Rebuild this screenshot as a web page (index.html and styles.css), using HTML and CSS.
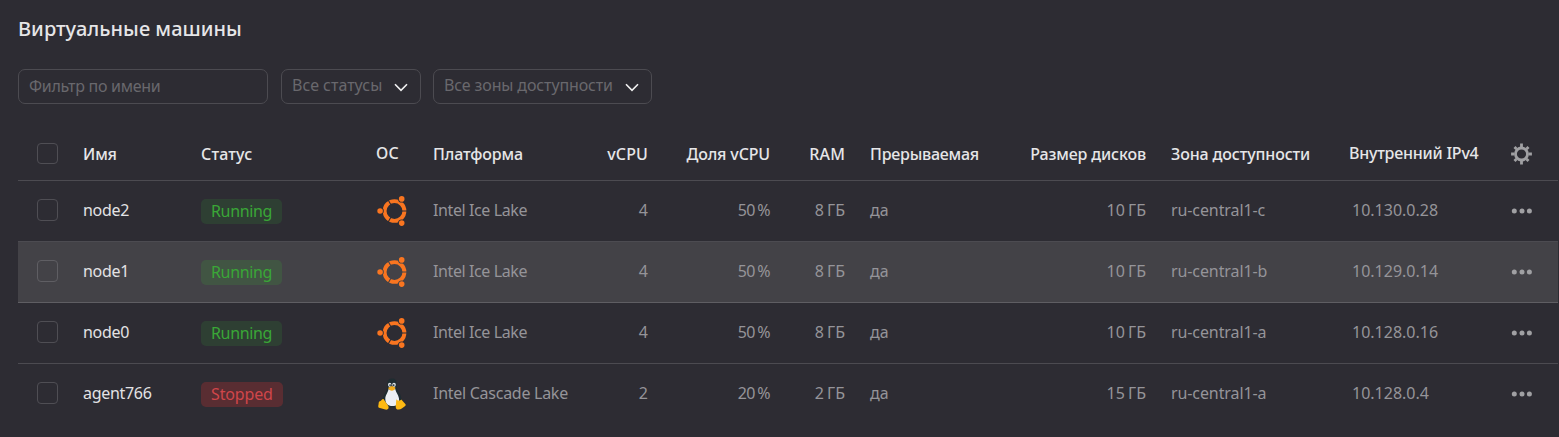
FILE: index.html
```
<!DOCTYPE html>
<html lang="ru">
<head>
<meta charset="utf-8">
<title>Виртуальные машины</title>
<link rel="stylesheet" href="styles.css">
</head>
<body>
<svg class="defs" width="0" height="0" aria-hidden="true">
  <mask id="ring-gaps" maskUnits="userSpaceOnUse" x="0" y="0" width="30" height="30">
    <path fill="#fff" d="M0 0h30v30H0z"/>
    <path stroke="#000" stroke-width="1.1" d="M17.500 15H30M17.500 15L10.900 3.500M17.500 15L10.900 26.500"/>
    <circle cx="3.100" cy="15" r="3.700"/><circle cx="24.700" cy="2.900" r="3.700"/><circle cx="24.700" cy="27.100" r="3.700"/>
  </mask>
  <symbol id="ubuntu" viewBox="0 0 30 30">
    <circle cx="17.500" cy="15" r="9.900" fill="none" stroke="#f97520" stroke-width="3.900" mask="url(#ring-gaps)"/>
    <g fill="#f97520">
      <circle cx="3.100" cy="15" r="2.800"/><circle cx="24.700" cy="2.900" r="2.800"/><circle cx="24.700" cy="27.100" r="2.800"/>
    </g>
  </symbol>
  <symbol id="dots" viewBox="0 0 21 6">
    <circle cx="3.300" cy="3" r="2.500"/><circle cx="11" cy="3" r="2.500"/><circle cx="18.400" cy="3" r="2.500"/>
  </symbol>
</svg>
<main class="page">
  <h1 class="title">Виртуальные машины</h1>
  <div class="filters">
    <div class="control search"><span>Фильтр по имени</span></div>
    <div class="control select status-select"><span>Все статусы</span><svg class="chevron" viewBox="0 0 14 9"><path d="M1 1.200L7 7.400L13 1.200"/></svg></div>
    <div class="control select zone-select"><span>Все зоны доступности</span><svg class="chevron" viewBox="0 0 14 9"><path d="M1 1.200L7 7.400L13 1.200"/></svg></div>
  </div>
  <div class="table">
    <div class="row head">
      <div class="check"><i class="box"></i></div>
      <div>Имя</div><div class="wide">Статус</div><div class="up wide">ОС</div><div>Платформа</div>
      <div class="num wide">vCPU</div><div class="num">Доля vCPU</div><div class="num wide">RAM</div>
      <div class="after tight">Прерываемая</div><div class="num">Размер дисков</div><div class="after">Зона доступности</div><div class="up tight">Внутренний IPv4</div>
      <div class="act"><svg class="gear" viewBox="0 0 22 22"><circle cx="10.500" cy="11" r="6"/><path d="M10.500 4V.6M10.500 18v3.400M3.500 11H.1M17.500 11h3.400M5.500 6L3.500 4M15.500 6l2-2M5.500 16l-2 2M15.500 16l2 2"/></svg></div>
    </div>
    <div class="row">
      <div class="check"><i class="box"></i></div>
      <div class="name">node2</div><div><span class="badge run">Running</span></div><div><svg class="os"><use href="#ubuntu"/></svg></div><div class="platform ice">Intel Ice Lake</div>
      <div class="num">4</div><div class="num percent">50 %</div><div class="num size">8 ГБ</div>
      <div class="after">да</div><div class="num size">10 ГБ</div><div class="after zone">ru-central1-c</div><div class="ip">10.130.0.28</div>
      <div class="act"><svg class="more"><use href="#dots"/></svg></div>
    </div>
    <div class="row hover">
      <div class="check"><i class="box"></i></div>
      <div class="name">node1</div><div><span class="badge run">Running</span></div><div><svg class="os"><use href="#ubuntu"/></svg></div><div class="platform ice">Intel Ice Lake</div>
      <div class="num">4</div><div class="num percent">50 %</div><div class="num size">8 ГБ</div>
      <div class="after">да</div><div class="num size">10 ГБ</div><div class="after zone">ru-central1-b</div><div class="ip">10.129.0.14</div>
      <div class="act"><svg class="more"><use href="#dots"/></svg></div>
    </div>
    <div class="row">
      <div class="check"><i class="box"></i></div>
      <div class="name">node0</div><div><span class="badge run">Running</span></div><div><svg class="os"><use href="#ubuntu"/></svg></div><div class="platform ice">Intel Ice Lake</div>
      <div class="num">4</div><div class="num percent">50 %</div><div class="num size">8 ГБ</div>
      <div class="after">да</div><div class="num size">10 ГБ</div><div class="after zone">ru-central1-a</div><div class="ip">10.128.0.16</div>
      <div class="act"><svg class="more"><use href="#dots"/></svg></div>
    </div>
    <div class="row last">
      <div class="check"><i class="box"></i></div>
      <div class="name">agent766</div><div><span class="badge stop">Stopped</span></div>
      <div><svg class="tux" viewBox="0 0 28 32">
        <path fill="#1f2c31" d="M14 .5c-3.500 0-4.800 2.600-4.700 6 .1 3.500.1 5-1.800 7.800C5.500 17.300 4.300 20 5 23.500l5 6h10l3.500-7c0-4-1.300-6.500-3.300-9.500C18.500 10.500 18.800 9 18.700 6.300 18.600 2.500 17.300.5 14 .5z"/>
        <path fill="#eceff4" d="M10.600 11c2.300 1.600 4.500 1.400 6.600-.2.800 4.200 4 6.700 3.900 11.200 0 4-2.600 6-6.800 6s-7-2.600-7-7c0-4 2.700-6.300 3.300-10z"/>
        <ellipse cx="11.700" cy="6.800" rx="1.700" ry="2.100" fill="#dfe4e8"/><ellipse cx="16" cy="6.800" rx="1.800" ry="2.100" fill="#dfe4e8"/>
        <circle cx="12.100" cy="7.100" r=".9" fill="#202c30"/><circle cx="15.700" cy="7.100" r=".9" fill="#202c30"/>
        <path fill="#f4ac1b" d="M10.200 9.800L13.800 8l3.600 1.500c.2 1.600-2 3.200-3.600 3.200S10.400 11.500 10.200 9.800z"/>
        <path fill="#fdb913" d="M5.500 21l4.800 7c1 2.500-.5 4-3 3.600L1 29.800C-.2 29 .3 27.500.6 26c.2-1.600 0-2.500 1.400-2.800C3.500 22.800 4 20.500 5.500 21zM18.300 21.300c1 1.700 4 1.600 5 .2l4 4.500c.9 1 .3 1.900-.8 2.500-1.800 1-3.500 3-5.700 3.100-2.700.2-3.300-1.400-3-3.900z"/>
      </svg></div><div class="platform">Intel Cascade Lake</div>
      <div class="num">2</div><div class="num percent">20 %</div><div class="num size">2 ГБ</div>
      <div class="after">да</div><div class="num size">15 ГБ</div><div class="after zone">ru-central1-a</div><div class="ip">10.128.0.4</div>
      <div class="act"><svg class="more"><use href="#dots"/></svg></div>
    </div>
  </div>
</main>
</body>
</html>
```
FILE: styles.css
```
* { box-sizing: border-box; }
body { margin: 0; background: #2d2c33; color: #959499; font: 16px/20px "Noto Sans", sans-serif; overflow: hidden; }
.defs { display: block; }
.page { height: 437px; padding: 15px 1px 0 18px; }
.title { margin: 0; font-size: 20px; line-height: 28px; font-weight: 500; letter-spacing: 0.03px; color: #e6e6e8; white-space: nowrap; }
.filters { display: flex; margin-top: 26px; color: #69686d; white-space: nowrap; }
.control { height: 35px; border: 1px solid #4c4b51; border-radius: 7px; padding: 0 10px; display: flex; align-items: center; }
.search { width: 250px; margin-right: 13px; padding-bottom: 2px; letter-spacing: -0.28px; }
.status-select { width: 140px; margin-right: 12px; }
.zone-select { width: 219px; letter-spacing: -0.13px; }
.select { justify-content: space-between; padding-right: 12px; padding-bottom: 3px; }
.chevron { width: 14px; height: 9px; margin-top: 5px; fill: none; stroke: #f1f1f2; stroke-width: 1.6; }
.table { margin-top: 23px; }
.row { display: grid; grid-template-columns: 65px 118px 175px 57px 115px 100px 122px 75px 155px 146px 203px 162px 47px; align-items: center; height: 61px; border-bottom: 1px solid #4c4b51; padding-bottom: 3px; white-space: nowrap; }
.head { height: 54px; font-weight: 500; letter-spacing: -0.13px; color: #e6e6e8; padding-bottom: 0; }
.head .wide { letter-spacing: 0.15px; }
.head .tight { letter-spacing: -0.23px; }
.hover { background: #434247; border-color: #5f5e63; }
.last { border: 0; padding-bottom: 4px; }
.check { padding-left: 19px; }
.box { display: block; width: 21px; height: 22px; border: 1px solid #4f4e54; border-radius: 4px; }
.head .box { height: 21px; margin-top: -1px; }
.hover .box { border-color: #5f5e63; }
.name { color: #e3e3e5; letter-spacing: -0.3px; }
.platform { letter-spacing: -0.27px; }
.platform.ice { letter-spacing: -0.4px; }
.percent { word-spacing: -1px; letter-spacing: -0.6px; }
.size { word-spacing: -1px; }
.zone { letter-spacing: -0.1px; }
.up { margin-top: -2px; }
.num { text-align: right; }
.after { padding-left: 25px; }
.ip { padding-left: 3px; }
.badge { display: inline-block; height: 25px; line-height: 25px; padding: 0 10px; border-radius: 5px; margin-top: 4px; vertical-align: middle; letter-spacing: -0.35px; }
.stop { letter-spacing: -0.15px; }
.run { background: rgba(59,165,53,.16); color: #3aa737; }
.hover .run { background: rgba(59,165,53,.2); }
.stop { background: rgba(210,47,48,.27); color: #d0464a; }
.os { display: block; width: 30px; height: 30px; margin: 3px 0 0 1px; }
.tux { display: block; width: 28px; height: 32px; margin: 3px 0 0 2px; }
.gear { display: block; width: 22px; height: 22px; fill: none; stroke: #a0a0a3; stroke-width: 2.8; }
.more { display: block; width: 21px; height: 6px; fill: #a0a0a3; margin-top: 3px; }
```
